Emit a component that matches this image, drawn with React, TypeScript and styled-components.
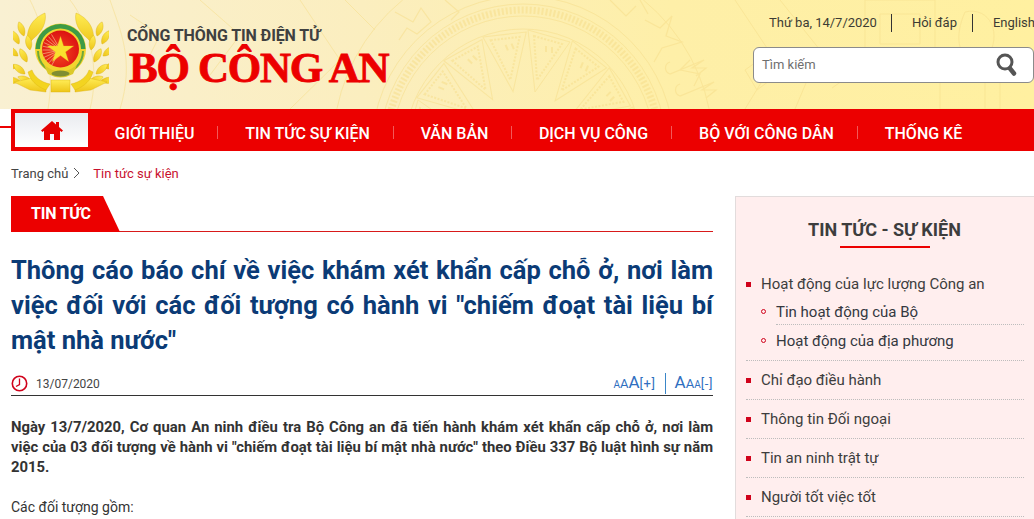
import React from "react";
import styled, { createGlobalStyle } from "styled-components";

const Global = createGlobalStyle`
  html, body { margin: 0; padding: 0; background: #fff; overflow: hidden; }
  body { width: 1034px; height: 519px; font-family: Roboto, "Liberation Sans", sans-serif; color: #333; }
`;
const Page = styled.div`width: 1034px; height: 519px; overflow: hidden; position: relative;`;
const Header = styled.header`
  position: relative; height: 109px; overflow: hidden;
  background: linear-gradient(90deg, #f9f0d2 0%, #fbeebf 35%, #feefa8 65%, #fff0a0 100%);
`;
const Decor = styled.svg`position: absolute; inset: 0; width: 100%; height: 100%;`;
const HeaderInner = styled.div`
  position: relative; display: flex; justify-content: space-between; height: 100%;
`;
const Brand = styled.div`display: flex; align-items: flex-start; padding: 11px 0 0 13px;`;
const BrandText = styled.div`display: flex; flex-direction: column; margin: 15px 0 0 18px;`;
const Portal = styled.div`
  font-size: 16px; font-weight: 700; line-height: 19px; color: #3f4040; letter-spacing: -0.1px; white-space: nowrap;
`;
const Ministry = styled.div`
  font-family: "Liberation Serif", serif; font-size: 43px; font-weight: 700; line-height: 46px;
  color: #ec0000; white-space: nowrap; letter-spacing: -1.3px; margin-left: 2px; -webkit-text-stroke: 0.8px #ec0000;
`;
const Tools = styled.div`display: flex; flex-direction: column; align-items: flex-start; padding: 14px 0 0 0; width: 281px;`;
const Meta = styled.div`display: flex; align-items: center; height: 18px; margin-left: 16px; white-space: nowrap;`;
const MetaItem = styled.span`
  font-size: 13px; color: #3c3c34; padding: 0 15px 0 20px; line-height: 18px; letter-spacing: -0.02px;
  &:first-child { padding-left: 0; padding-right: 14px; }
  & + & { border-left: 1px solid #333; }
`;
const Search = styled.div`
  display: flex; align-items: center; justify-content: space-between; box-sizing: border-box;
  width: 281px; height: 36px; margin-top: 15px; padding: 0 0 2px 8px; background: #fff;
  border: 1px solid #8b8b8b; border-radius: 6px; font-size: 13px; color: #6f6f6f;
`;
const SearchIcon = styled.svg`width: 21px; height: 24px; margin: 2px 16px 0 0;`;
const Nav = styled.nav`
  position: relative; display: flex; align-items: center; height: 42px; margin-left: 11px; background: #ec0000;
  &::before { content: ""; position: absolute; left: -11px; top: 17px; width: 11px; height: 2px; background: #ec0000; }
`;
const Home = styled.div`
  display: flex; align-items: center; justify-content: center; width: 73px; height: 34px; margin-left: 4px;
  background: linear-gradient(180deg, #e9ebef 0%, #ffffff 100%);
`;
const NavItem = styled.div<{ $w: number }>`
  display: flex; align-items: center; justify-content: center; box-sizing: border-box; width: ${(p) => p.$w}px; height: 42px;
  padding: 6px 0 0 3px; position: relative; font-size: 16px; font-weight: 500; color: #fff; white-space: nowrap;
  &:not(:last-child)::after {
    content: ""; position: absolute; right: 0; top: 17px; height: 13px; width: 1px; background: rgba(255,255,255,.35);
  }
`;
const Main = styled.div`display: flex; align-items: flex-start; padding-left: 11px; gap: 22px;`;
const Content = styled.div`width: 702px; flex: none;`;
const Crumbs = styled.div`display: flex; align-items: center; height: 18px; margin-top: 13px; font-size: 13px; color: #444;`;
const CrumbSep = styled.svg`width: 8px; height: 12px; margin: 0 0 0 5px;`;
const CrumbNow = styled.span`color: #c8102e; margin-left: 12px;`;
const SectionHead = styled.div`height: 35px; margin-top: 14px; border-bottom: 1px solid #d81a1a;`;
const SectionTab = styled.div`
  width: 109px; height: 36px; background: #ec0000; color: #fff; font-size: 16px; font-weight: 700;
  line-height: 36px; padding-left: 20px; box-sizing: border-box; letter-spacing: -0.2px;
  clip-path: polygon(0 0, 92px 0, 109px 100%, 0 100%);
`;
const Title = styled.h1`
  margin: 21px 0 0; font-size: 25.5px; font-weight: 700; line-height: 35px; color: #0b3b76; text-align: justify;
`;
const DateRow = styled.div`
  display: flex; align-items: center; justify-content: space-between; height: 25px; margin-top: 12px;
  border-bottom: 1px solid #333; font-size: 12px; color: #444;
`;
const DateLeft = styled.div`display: flex; align-items: center; gap: 8px; margin-top: 2px;`;
const Sizer = styled.div`display: flex; align-items: flex-end; color: #2f6fc0; height: 19px; margin-top: 4px;`;
const SizeLink = styled.span`
  display: inline-flex; align-items: baseline; line-height: 18px;
  & + & { border-left: 1px solid #3a86c8; margin-left: 9px; padding-left: 9px; }
`;
const A = styled.span<{ $s: number }>`font-size: ${(p) => p.$s}px; line-height: 18px;`;
const Bracket = styled.span`font-size: 13px; line-height: 18px; letter-spacing: 0.6px;`;
const Lead = styled.p`
  margin: 21px 0 0; font-size: 14.85px; font-weight: 700; line-height: 20px; color: #333; text-align: justify;
`;
const Para = styled.p`margin: 20px 0 0; font-size: 14px; line-height: 20px; color: #333;`;
const Side = styled.aside`
  box-sizing: border-box; flex: none; width: 320px; height: 340px; margin-top: 45px; padding: 20px 30px 0 10px;
  background: #ffeeee; border: 1px solid #e2dcdc;
`;
const SideTitle = styled.h2`
  position: relative; margin: 0; width: 277px; font-size: 18px; font-weight: 700; line-height: 26px; color: #3d3d3d; text-align: center;
  padding-bottom: 5px;
  &::after { content: ""; position: absolute; left: 94px; bottom: 0; width: 90px; height: 2px; background: #ec0000; }
`;
const Menu = styled.ul`list-style: none; margin: 26px 0 0; padding: 0; width: 278px;`;
const MenuItem = styled.li`
  position: relative; padding: 0 0 9px 15px; margin-bottom: 9px; font-size: 15px; line-height: 20px; color: #3d3d3d;
  border-bottom: 1px dotted #bdbdbd;
  &::before { content: ""; position: absolute; left: 0; top: 8px; width: 5px; height: 5px; background: #d0021b; }
`;
const SubMenu = styled.ul`list-style: none; margin: 8px 0 -2px; padding: 0;`;
const SubItem = styled.li<{ $last?: boolean }>`
  position: relative; margin-left: 15px; font-size: 15px; line-height: 20px; color: #34383f; padding-bottom: 2px;
  border-bottom: ${(p) => (p.$last ? "none" : "1px dotted #bdbdbd")}; margin-bottom: ${(p) => (p.$last ? 0 : "6px")};
  &::before { content: ""; position: absolute; left: -15px; top: 7px; width: 3px; height: 3px; border: 1px solid #d0021b; border-radius: 50%; }
`;

function Emblem() {
  const leaflets: [number, number, number][] = [
    [24, 30, -20], [19, 38, -28], [30, 44, -10], [18, 50, -50], [27, 56, -28],
    [16, 62, -70], [25, 68, -50], [20, 75, -85], [32, 76, -70],
  ];
  const Half = () => (
    <g>
      <path d="M45 13C33 18 25 29 28 44L34 38C42 32 47 22 45 13Z" fill="url(#gold)" stroke="#d8b012" strokeWidth=".4" />
      {leaflets.map(([x, y, r], i) => (
        <path key={i} d="M0 0C-4 -4 -4 -11 0 -15C4 -11 4 -4 0 0Z" transform={`translate(${x} ${y + 6}) rotate(${r})`} fill="url(#gold)" stroke="#d8b012" strokeWidth=".4" />
      ))}
      <path d="M14 82L33 78L46 86V92L30 90Z" fill="url(#gold)" stroke="#d8b012" strokeWidth=".4" />
      <path d="M32 70C34 76 40 82 50 84L46 90C36 86 30 80 28 72Z" fill="#f3d420" stroke="#d8b012" strokeWidth=".4" />
    </g>
  );
  const rays = Array.from({ length: 11 }, (_, i) => 120 + i * 12);
  return (
    <svg width="96" height="83" viewBox="13 11 96 83" style={{ flex: "none" }}>
      <defs>
        <linearGradient id="gold" x1="0" y1="0" x2="0" y2="1">
          <stop offset="0" stopColor="#ffec55" /><stop offset="1" stopColor="#eec518" />
        </linearGradient>
        <radialGradient id="rd" cx="0.45" cy="0.6" r="0.6">
          <stop offset="0" stopColor="#f4471f" /><stop offset="1" stopColor="#dc1212" />
        </radialGradient>
      </defs>
      <Half />
      <g transform="translate(121 0) scale(-1 1)"><Half /></g>
      <rect x="51" y="80" width="19" height="12" fill="url(#gold)" stroke="#d8b012" strokeWidth=".4" />
      <circle cx="60.5" cy="49" r="25.5" fill="#f2d52e" />
      <path d="M35.5 49A25 25 0 0 1 85.5 49H81A20.5 20.5 0 0 0 40 49Z" fill="#3d9b46" />
      <path d="M38 51A22.5 22.5 0 0 0 83 51" fill="none" stroke="#6fa83a" strokeWidth="2" />
      <circle cx="60.5" cy="49" r="18.5" fill="url(#rd)" />
      {rays.map((a) => (
        <line key={a} x1="60.5" y1="50" x2={60.5 + 18 * Math.cos((a * Math.PI) / 180)} y2={50 + 18 * Math.sin((a * Math.PI) / 180)} stroke="#f8b48a" strokeWidth=".7" />
      ))}
      <path d="M60.5 36.5L63.6 46H73.6L65.5 51.9L68.6 61.4L60.5 55.5L52.4 61.4L55.5 51.9L47.4 46H57.4Z" fill="#f9e12e" stroke="#e9bd18" strokeWidth=".3" />
      <path d="M44 65Q60.5 78 77 65L73 74Q60.5 81 48 74Z" fill="#dcc92a" />
      <ellipse cx="60.5" cy="73.5" rx="9" ry="3" fill="#7f8d31" />
    </svg>
  );
}

function Pattern() {
  const cx = 523, cy = 147;
  const steps = [-5, -4, -3, -2, -1, 0, 1, 2, 3, 4];
  return (
    <Decor viewBox="0 0 1034 109" fill="none" stroke="#f7de8b" strokeWidth="1" opacity=".55">
      <circle cx={cx} cy={cy} r={151} />
      <circle cx={cx} cy={cy} r={143} />
      <circle cx={cx} cy={cy} r={131} />
      <circle cx={cx} cy={cy} r={137} strokeWidth="7" strokeDasharray="2 2" />
      <circle cx={cx} cy={cy} r={118} />
      <circle cx={cx} cy={cy} r={190} />
      {steps.map((s) => (
        <g key={s} transform={`rotate(${s * 22.5} ${cx} ${cy})`}>
          <path d="M528 30L570 42L535 92Z" />
          <path d="M534 36L562 44L537 80Z" strokeDasharray="2 1.5" strokeWidth="2" />
          <path d="M546 46v6M552 47v6" strokeWidth="2" />
        </g>
      ))}
      <path d="M645 20l15 8 12-12-6 20 16 6-20 6-8 14M690 60l-10 10 20 4-6 12M670 62c-6 2-6 10 0 12l34-14-12 8 14 0-10 8M680 84c-6 2-6 10 0 12l34-14-12 8 14 0-10 8" strokeWidth="1.2" />
      <path d="M395 12l18 10 8-14 10 14-14 12-10-6-8 12M445 0l14 12-8 8M610 0l16 16 10-10M640 0l8 14" strokeWidth="1.2" />
      <path d="M30 0C45 30 55 70 48 109M70 0C90 25 100 70 90 109M110 0C120 30 135 60 120 109M300 0L340 60L290 109M130 15l30 20-10 20M200 0l40 35-30 40M345 0l30 30" />
      <path d="M735 0l40 60-30 49M780 0l40 50-25 59M865 0h70v58h-70zM880 14h40v30h-40zM965 12c25-6 38 22 22 46-20 12-38-10-22-46zM940 70h60v39h-60zM955 82h30v27M830 60l22 14-20 14M745 70l14-10 14 18-16 12z" />
    </Decor>
  );
}

const App = () => (
  <Page>
    <Global />
    <Header>
      <Pattern />
      <HeaderInner>
        <Brand>
          <Emblem />
          <BrandText>
            <Portal>CỔNG THÔNG TIN ĐIỆN TỬ</Portal>
            <Ministry>BỘ CÔNG AN</Ministry>
          </BrandText>
        </Brand>
        <Tools>
          <Meta>
            <MetaItem>Thứ ba, 14/7/2020</MetaItem>
            <MetaItem>Hỏi đáp</MetaItem>
            <MetaItem>English</MetaItem>
          </Meta>
          <Search>
            <span>Tìm kiếm</span>
            <SearchIcon viewBox="0 0 21 24">
              <circle cx="9" cy="9" r="7" fill="#fff" stroke="#555" strokeWidth="3" />
              <path d="M14 15.5l4 5" stroke="#555" strokeWidth="4.5" strokeLinecap="round" />
            </SearchIcon>
          </Search>
        </Tools>
      </HeaderInner>
    </Header>
    <Nav>
      <Home>
        <svg width="22" height="19" viewBox="0 0 22 19">
          <path d="M11 0L0 9.5l1.5 1.5L3 9.8V19h6v-6h4v6h6V9.8l1.5 1.2L22 9.5 18 6V1h-3v2.4z" fill="#e60000" />
        </svg>
      </Home>
      <NavItem $w={130}>GIỚI THIỆU</NavItem>
      <NavItem $w={176}>TIN TỨC SỰ KIỆN</NavItem>
      <NavItem $w={118}>VĂN BẢN</NavItem>
      <NavItem $w={160}>DỊCH VỤ CÔNG</NavItem>
      <NavItem $w={186}>BỘ VỚI CÔNG DÂN</NavItem>
      <NavItem $w={128}>THỐNG KÊ</NavItem>
    </Nav>
    <Main>
      <Content>
        <Crumbs>
          <span>Trang chủ</span>
          <CrumbSep viewBox="0 0 8 12"><path d="M1 1l5 5-5 5" fill="none" stroke="#555" strokeWidth="1" /></CrumbSep>
          <CrumbNow>Tin tức sự kiện</CrumbNow>
        </Crumbs>
        <SectionHead><SectionTab>TIN TỨC</SectionTab></SectionHead>
        <Title>Thông cáo báo chí về việc khám xét khẩn cấp chỗ ở, nơi làm việc đối với các đối tượng có hành vi "chiếm đoạt tài liệu bí mật nhà nước"</Title>
        <DateRow>
          <DateLeft>
            <svg width="17" height="17" viewBox="0 0 17 17">
              <circle cx="8.5" cy="8.5" r="7.2" fill="none" stroke="#d0021b" strokeWidth="1.6" />
              <path d="M8.5 3.5v6L5 11.5" fill="none" stroke="#d0021b" strokeWidth="1.3" />
            </svg>
            <span>13/07/2020</span>
          </DateLeft>
          <Sizer>
            <SizeLink><A $s={10}>A</A><A $s={13}>A</A><A $s={17}>A</A><Bracket>[+]</Bracket></SizeLink>
            <SizeLink><A $s={17}>A</A><A $s={13}>A</A><A $s={10}>A</A><Bracket>[-]</Bracket></SizeLink>
          </Sizer>
        </DateRow>
        <Lead>Ngày 13/7/2020, Cơ quan An ninh điều tra Bộ Công an đã tiến hành khám xét khẩn cấp chỗ ở, nơi làm việc của 03 đối tượng về hành vi "chiếm đoạt tài liệu bí mật nhà nước" theo Điều 337 Bộ luật hình sự năm 2015.</Lead>
        <Para>Các đối tượng gồm:</Para>
      </Content>
      <Side>
        <SideTitle>TIN TỨC - SỰ KIỆN</SideTitle>
        <Menu>
          <MenuItem>Hoạt động của lực lượng Công an
            <SubMenu>
              <SubItem>Tin hoạt động của Bộ</SubItem>
              <SubItem $last>Hoạt động của địa phương</SubItem>
            </SubMenu>
          </MenuItem>
          <MenuItem>Chỉ đạo điều hành</MenuItem>
          <MenuItem>Thông tin Đối ngoại</MenuItem>
          <MenuItem>Tin an ninh trật tự</MenuItem>
          <MenuItem>Người tốt việc tốt</MenuItem>
        </Menu>
      </Side>
    </Main>
  </Page>
);
export default App;
